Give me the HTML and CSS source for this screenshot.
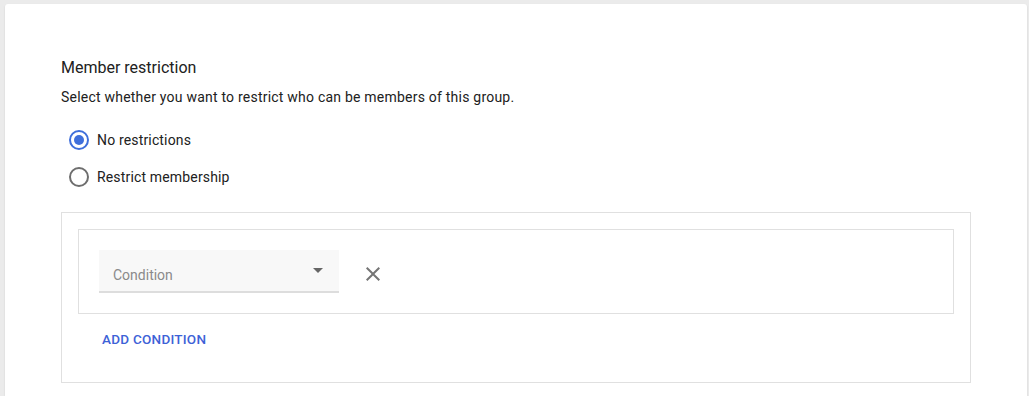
FILE: index.html
```html
<!DOCTYPE html>
<html lang="en">
<head>
<meta charset="utf-8">
<title>Member restriction</title>
<link rel="stylesheet" href="styles.css">
</head>
<body>
<div class="page">
  <section class="card">
    <h2 class="title">Member restriction</h2>
    <p class="desc">Select whether you want to restrict who can be members of this group.</p>
    <div class="radios">
      <label class="radio-row">
        <span class="radio checked"><span class="dot"></span></span>
        <span class="radio-label">No restrictions</span>
      </label>
      <label class="radio-row">
        <span class="radio"></span>
        <span class="radio-label">Restrict membership</span>
      </label>
    </div>
    <div class="outer-box">
      <div class="inner-box">
        <div class="select">
          <span class="select-text">Condition</span>
          <span class="caret"></span>
        </div>
        <svg class="close" width="24" height="24" viewBox="0 0 24 24" aria-hidden="true">
          <path d="M19 6.41L17.59 5 12 10.59 6.41 5 5 6.41 10.59 12 5 17.59 6.41 19 12 13.41 17.59 19 19 17.59 13.41 12z" fill="#757575"/>
        </svg>
      </div>
      <div class="add-row">
        <span class="add-btn">ADD CONDITION</span>
      </div>
    </div>
  </section>
</div>
</body>
</html>
```

FILE: styles.css
```css
* { box-sizing: border-box; }
html, body {
  margin: 0;
  padding: 0;
  background: #ebebeb;
  height: 100%;
  overflow: hidden;
}
body {
  font-family: Roboto, "Liberation Sans", Arial, sans-serif;
  color: #212121;
}
.page {
  height: 100%;
  padding: 4px 2px 0 5px;
}
.card {
  height: 100%;
  background: #fff;
  border-radius: 3px 3px 0 0;
  box-shadow: 0 1px 2px rgba(0,0,0,0.12);
  padding: 52px 56px 0 56px;
  overflow: hidden;
}
.title {
  margin: 0;
  font-size: 16px;
  font-weight: 400;
  line-height: 24px;
  color: #212121;
}
.desc {
  margin: 7px 0 0 0;
  font-size: 14px;
  line-height: 20px;
  letter-spacing: 0.22px;
  color: #212121;
}
.radios {
  margin-top: 14px;
  display: flex;
  flex-direction: column;
}
.radio-row {
  display: flex;
  align-items: center;
  height: 37px;
  padding-left: 8px;
}
.radio {
  width: 20px;
  height: 20px;
  border: 2px solid #6e6e6e;
  border-radius: 50%;
  display: flex;
  align-items: center;
  justify-content: center;
  flex: none;
}
.radio.checked {
  border-color: #3f6fdb;
}
.dot {
  width: 10px;
  height: 10px;
  border-radius: 50%;
  background: #3f6fdb;
}
.radio-label {
  margin-left: 8px;
  font-size: 14px;
  line-height: 20px;
  letter-spacing: 0.16px;
  color: #212121;
}
.outer-box {
  margin-top: 17px;
  width: 910px;
  border: 1px solid #e0e0e0;
  padding: 16px 16px 16px 16px;
}
.inner-box {
  border: 1px solid #e0e0e0;
  padding: 20px;
  display: flex;
  align-items: center;
}
.select {
  width: 240px;
  height: 43px;
  background: #f8f8f8;
  border-bottom: 2px solid #dddddd;
  display: flex;
  align-items: center;
  justify-content: space-between;
  padding: 9px 16px 0 14px;
}
.select-text {
  font-size: 14px;
  color: #8a8a8a;
}
.caret {
  width: 0;
  height: 0;
  border-left: 5px solid transparent;
  border-right: 5px solid transparent;
  border-top: 5px solid #666;
  margin-top: -10px;
}
.close {
  margin-left: 22px;
  margin-top: 5px;
  flex: none;
}
.add-row {
  padding: 15px 0 17px 24px;
  line-height: 20px;
}
.add-btn {
  font-size: 13.5px;
  font-weight: 500;
  color: #3d62d7;
  letter-spacing: 0.25px;
}
```
